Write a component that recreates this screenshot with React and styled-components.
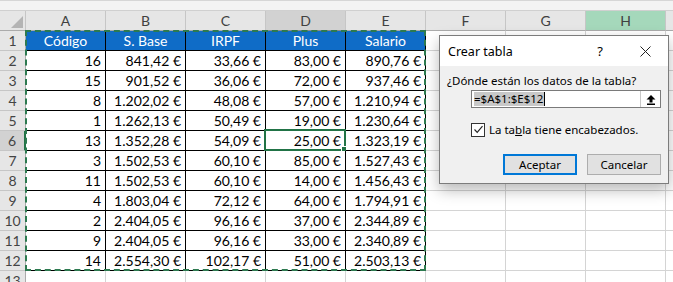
import React from "react";
import styled, {createGlobalStyle} from "styled-components";

const GlobalStyle = createGlobalStyle`
    html, body {
        margin: 0;
        padding: 0;
        background: #ffffff;
    }
    body {
        font-family: Lato, "Liberation Sans", sans-serif;
    }
`;

const columns = ["A", "B", "C", "D", "E", "F", "G", "H", ""];

const rows = [
    ["Código", "S. Base", "IRPF", "Plus", "Salario"],
    ["16", "841,42 €", "33,66 €", "83,00 €", "890,76 €"],
    ["15", "901,52 €", "36,06 €", "72,00 €", "937,46 €"],
    ["8", "1.202,02 €", "48,08 €", "57,00 €", "1.210,94 €"],
    ["1", "1.262,13 €", "50,49 €", "19,00 €", "1.230,64 €"],
    ["13", "1.352,28 €", "54,09 €", "25,00 €", "1.323,19 €"],
    ["3", "1.502,53 €", "60,10 €", "85,00 €", "1.527,43 €"],
    ["11", "1.502,53 €", "60,10 €", "14,00 €", "1.456,43 €"],
    ["4", "1.803,04 €", "72,12 €", "64,00 €", "1.794,91 €"],
    ["2", "2.404,05 €", "96,16 €", "37,00 €", "2.344,89 €"],
    ["9", "2.404,05 €", "96,16 €", "33,00 €", "2.340,89 €"],
    ["14", "2.554,30 €", "102,17 €", "51,00 €", "2.503,13 €"],
];

const Page = styled.div`
    position: relative;
    width: 673px;
    height: 282px;
    overflow: hidden;
`;

const TopStrip = styled.div`
    height: 10px;
    background: #f3f3f3;
    border-top: 1px solid #d6d6d6;
    box-sizing: border-box;
`;

const Sheet = styled.div`
    position: relative;
    display: grid;
    grid-template-columns: 26px repeat(9, 80px);
    grid-auto-rows: 20px;
    border-top: 1px solid #d0d0d0;
`;

const Corner = styled.div`
    background: #e6e6e6;
    border-right: 1px solid #c6c6c6;
    border-bottom: 1px solid #ababab;
    box-sizing: border-box;
    display: flex;
    align-items: flex-end;
    justify-content: flex-end;
    padding: 0 2px 2px 0;
`;

const ColHead = styled.div`
    background: ${p => p.$state === "current" ? "#d2d2d2" : p.$state === "green" ? "#a5d8bb" : "#e6e6e6"};
    border-right: 1px solid #c6c6c6;
    border-bottom: ${p => p.$state === "current" ? "1px solid #8a8a8a" : "1px solid #ababab"};
    box-sizing: border-box;
    display: flex;
    align-items: center;
    justify-content: center;
    font-size: 14px;
    color: #404040;
`;

const RowHead = styled.div`
    background: ${p => p.$current ? "#d2d2d2" : "#e6e6e6"};
    border-right: ${p => p.$current ? "2px solid #217346" : "1px solid #ababab"};
    border-bottom: 1px solid #c6c6c6;
    box-sizing: border-box;
    display: flex;
    align-items: center;
    justify-content: center;
    font-size: 14px;
    color: #444;
`;

const Cell = styled.div`
    position: relative;
    box-sizing: border-box;
    background: ${p => p.$head ? "#0f6cc7" : "#ffffff"};
    color: ${p => p.$head ? "#ffffff" : "#000000"};
    border-right: 1px solid ${p => p.$table ? "#000000" : "#d4d4d4"};
    border-bottom: 1px solid ${p => p.$table ? "#000000" : "#d4d4d4"};
    display: flex;
    align-items: center;
    justify-content: ${p => p.$head ? "center" : "flex-end"};
    padding: 0 4px;
    font-size: 14px;
    white-space: nowrap;
`;

const ActiveFrame = styled.div`
    position: absolute;
    left: -2px;
    top: -2px;
    right: -1px;
    bottom: -1px;
    border: 2px solid #217346;
    pointer-events: none;

    &::after {
        content: "";
        position: absolute;
        right: -4px;
        bottom: -4px;
        width: 5px;
        height: 5px;
        background: #217346;
        border: 1px solid #ffffff;
    }
`;

const Marquee = styled.div`
    position: absolute;
    left: 25px;
    top: 19px;
    width: 401px;
    height: 241px;
    box-sizing: border-box;
    border: 2px dashed #2d7a50;
    pointer-events: none;
`;

const Dialog = styled.div`
    position: absolute;
    left: 439px;
    top: 35px;
    width: 230px;
    height: 149px;
    box-sizing: border-box;
    border: 1px solid #7c7c7c;
    background: #f0f0f0;
    box-shadow: 0 6px 14px rgba(0, 0, 0, 0.28);
    font-family: "Noto Sans", "Open Sans", sans-serif;
    font-size: 11.5px;
    color: #000;
    display: flex;
    flex-direction: column;
`;

const TitleBar = styled.div`
    height: 30px;
    background: #ffffff;
    display: flex;
    align-items: center;
    padding-left: 8px;
    font-size: 12.5px;
`;

const TitleText = styled.span`
    flex: 1;
`;

const HelpMark = styled.span`
    width: 24px;
    text-align: center;
    margin-right: 10px;
    font-size: 13px;
`;

const CloseBox = styled.span`
    width: 46px;
    display: flex;
    justify-content: center;
`;

const Body = styled.div`
    flex: 1;
    display: flex;
    flex-direction: column;
    padding: 8px 7px 0 7px;
`;

const Prompt = styled.div`
    line-height: 14px;
`;

const RefBox = styled.div`
    margin: 2px 0 0 24px;
    height: 18px;
    box-sizing: border-box;
    border: 1px solid #7a7a7a;
    background: #ffffff;
    display: flex;
    align-items: center;
`;

const RefText = styled.div`
    flex: 1;
    display: flex;
    align-items: center;
    padding-left: 2px;
`;

const Selected = styled.span`
    background: #c8c8c8;
    line-height: 14px;
    padding-right: 1px;
    border-right: 1px solid #000;
`;

const CollapseButton = styled.div`
    width: 19px;
    height: 16px;
    border-left: 1px solid #c8c8c8;
    display: flex;
    align-items: center;
    justify-content: center;
`;

const CheckRow = styled.label`
    margin: 14px 0 0 24px;
    display: flex;
    align-items: center;
    gap: 4px;
`;

const Box = styled.span`
    width: 14px;
    height: 14px;
    box-sizing: border-box;
    border: 1px solid #333;
    background: #fff;
    display: flex;
    align-items: center;
    justify-content: center;
`;

const Buttons = styled.div`
    margin-top: auto;
    margin-bottom: 8px;
    display: flex;
    justify-content: flex-end;
    gap: 10px;
`;

const Button = styled.div`
    width: 74px;
    height: 21px;
    box-sizing: border-box;
    background: #e1e1e1;
    border: ${p => p.$primary ? "2px solid #0078d7" : "1px solid #adadad"};
    display: flex;
    align-items: center;
    justify-content: center;
`;

export default function App() {
    return (
        <>
            <GlobalStyle/>
            <Page>
                <TopStrip/>
                <Sheet>
                    <Corner>
                        <svg width="12" height="12" viewBox="0 0 12 12">
                            <polygon points="12,0 12,12 0,12" fill="#b4b4b4"/>
                        </svg>
                    </Corner>
                    {columns.map((c, ci) =>
                        <ColHead key={ci} $state={c === "D" ? "current" : c === "H" ? "green" : ""}>{c}</ColHead>
                    )}
                    {[...rows, null].map((row, r) =>
                        <React.Fragment key={r}>
                            <RowHead $current={r === 5}>{r + 1}</RowHead>
                            {columns.map((c, ci) => {
                                const inTable = row && ci < 5;
                                return (
                                    <Cell key={ci} $table={inTable} $head={inTable && r === 0}>
                                        {inTable ? row[ci] : null}
                                        {r === 5 && c === "D" && <ActiveFrame/>}
                                    </Cell>
                                );
                            })}
                        </React.Fragment>
                    )}
                    <Marquee/>
                </Sheet>
                <Dialog>
                    <TitleBar>
                        <TitleText>Crear tabla</TitleText>
                        <HelpMark>?</HelpMark>
                        <CloseBox>
                            <svg width="11" height="11" viewBox="0 0 11 11">
                                <path d="M0.5 0.5 L10.5 10.5 M10.5 0.5 L0.5 10.5" stroke="#222" strokeWidth="1"/>
                            </svg>
                        </CloseBox>
                    </TitleBar>
                    <Body>
                        <Prompt><u>¿</u>Dónde están los datos de la tabla?</Prompt>
                        <RefBox>
                            <RefText><Selected>=$A$1:$E$12</Selected></RefText>
                            <CollapseButton>
                                <svg width="10" height="11" viewBox="0 0 10 11">
                                    <path d="M5 1 L9.5 5.5 L6.5 5.5 L6.5 8.5 L3.5 8.5 L3.5 5.5 L0.5 5.5 Z" fill="#000"/>
                                    <rect x="1" y="9.5" width="8" height="1.5" fill="#000"/>
                                </svg>
                            </CollapseButton>
                        </RefBox>
                        <CheckRow>
                            <Box>
                                <svg width="11" height="11" viewBox="0 0 11 11">
                                    <path d="M1.5 5.5 L4.2 8.3 L9.5 2.2" stroke="#222" strokeWidth="1.2" fill="none"/>
                                </svg>
                            </Box>
                            <span>La ta<u>b</u>la tiene encabezados.</span>
                        </CheckRow>
                        <Buttons>
                            <Button $primary>Aceptar</Button>
                            <Button>Cancelar</Button>
                        </Buttons>
                    </Body>
                </Dialog>
            </Page>
        </>
    );
}
